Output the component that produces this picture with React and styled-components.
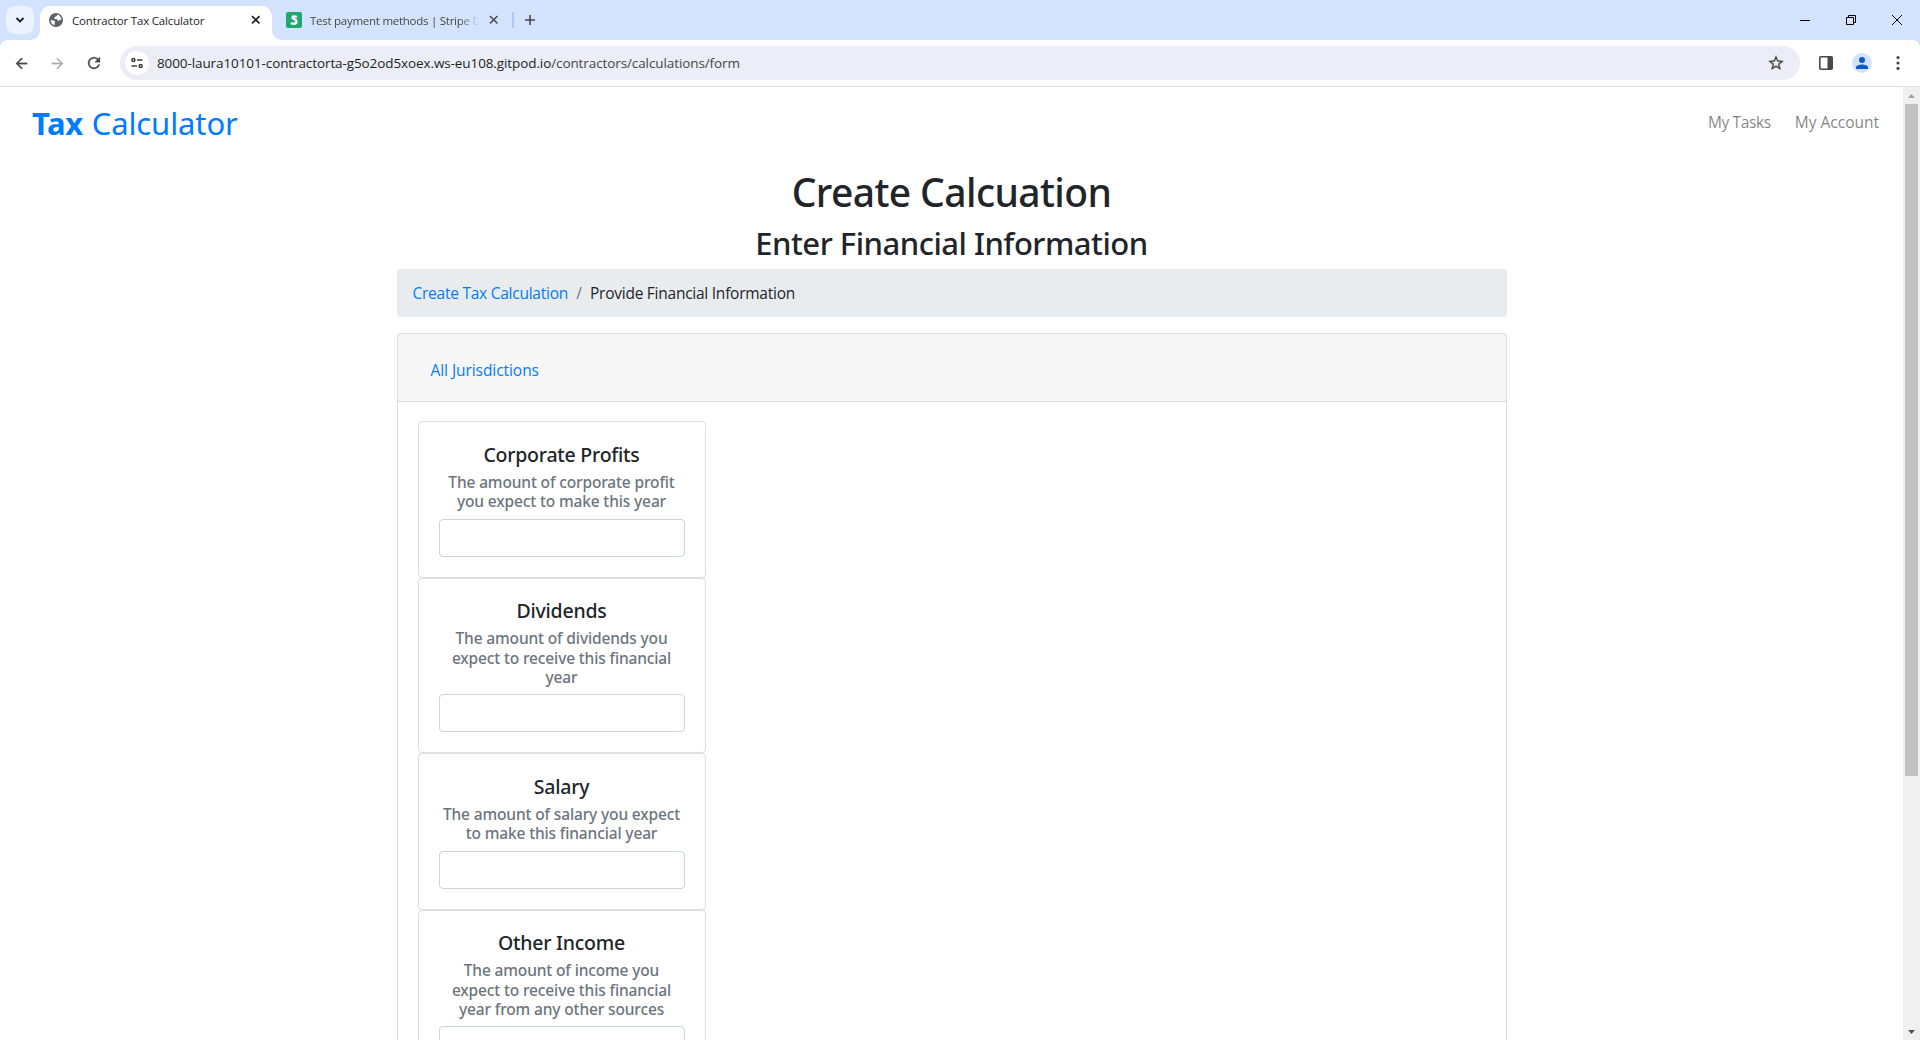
import React from "react";
import styled, { createGlobalStyle } from "styled-components";

const Global = createGlobalStyle`
  * { box-sizing: border-box; }
  html, body { margin: 0; height: 100%; overflow: hidden; background: #fff; }
  body { font-family: "Open Sans", "Noto Sans", sans-serif; color: #212529; }
  h1, h2, h5, h6 { margin: 0; font-family: "Noto Sans", sans-serif; font-weight: 500; }
  a { text-decoration: none; }
`;

const Window = styled.div`
  width: 1920px;
  height: 1040px;
  display: flex;
  flex-direction: column;
  overflow: hidden;
`;

/* Browser chrome */
const TabStrip = styled.div`
  height: 40px;
  background: #d3e3fd;
  display: flex;
  align-items: flex-start;
  padding: 6px 0 0 6px;
`;
const TabSearch = styled.button`
  width: 28px;
  height: 28px;
  margin-right: 6px;
  border: 0;
  padding: 0;
  border-radius: 9px;
  background: #ecf2fe;
  display: grid;
  place-items: center;
`;
const Tab = styled.div`
  position: relative;
  flex: none;
  height: 34px;
  width: ${(p) => p.$width}px;
  display: flex;
  align-items: center;
  padding: ${(p) => p.$padding};
  border-radius: 10px 10px 0 0;
  background: ${(p) => (p.$active ? "#fff" : "transparent")};
  ${(p) =>
    p.$active &&
    `
    &::before, &::after {
      content: "";
      position: absolute;
      bottom: 0;
      width: 10px;
      height: 10px;
    }
    &::before { left: -10px; background: radial-gradient(circle at 0 0, transparent 9.6px, #fff 10.2px); }
    &::after { right: -10px; background: radial-gradient(circle at 100% 0, transparent 9.6px, #fff 10.2px); }
  `}
`;
const Favicon = styled.span`
  display: flex;
  flex: none;
  margin-right: ${(p) => p.$gap}px;
  margin-bottom: 6px;
`;
const TabTitle = styled.span`
  flex: 1;
  min-width: 0;
  overflow: hidden;
  white-space: nowrap;
  font-size: 11.5px;
  line-height: 16px;
  margin-bottom: 4px;
  letter-spacing: ${(p) => p.$spacing}px;
  color: ${(p) => (p.$active ? "#1f1f1f" : "#474747")};
  ${(p) => p.$fade && "mask-image: linear-gradient(90deg, #000 88%, transparent 100%);"}
`;
const TabClose = styled.span`
  display: flex;
  flex: none;
  margin-left: ${(p) => p.$gap || 0}px;
  margin-bottom: 6px;
`;
const TabDivider = styled.span`
  width: 2px;
  height: 16px;
  margin: 6px 10px 0 0;
  border-radius: 1px;
  background: #a8c7fa;
`;
const NewTab = styled.span`
  display: flex;
  margin-top: 8px;
`;
const WindowControls = styled.div`
  margin-left: auto;
  display: flex;
  height: 28px;
`;
const WindowButton = styled.span`
  width: 46px;
  display: grid;
  place-items: center;
`;

const ToolbarBack = styled.div`
  background: #d3e3fd;
`;
const Toolbar = styled.div`
  height: 47px;
  background: #fff;
  border-radius: 8px 8px 0 0;
  border-bottom: 1px solid #dedfe1;
  display: flex;
  align-items: center;
  padding-left: 13px;
`;
const ToolIcon = styled.span`
  width: ${(p) => p.$width}px;
  flex: none;
  display: grid;
  place-items: center;
`;
const Omnibox = styled.div`
  width: 1680px;
  flex: none;
  height: 34px;
  margin-left: 18px;
  border-radius: 17px;
  background: #ebeef7;
  display: flex;
  align-items: center;
  padding: 0 15px 0 5px;
`;
const SiteInfo = styled.span`
  width: 24px;
  height: 24px;
  border-radius: 50%;
  background: #fff;
  display: grid;
  place-items: center;
  margin-right: 8px;
`;
const Url = styled.span`
  flex: 1;
  font-size: 13.5px;
  line-height: 20px;
  letter-spacing: -0.1px;
  white-space: nowrap;
  color: #474747;
  b { font-weight: 400; color: #1f1f1f; }
`;
const Profile = styled.span`
  width: 20px;
  height: 20px;
  border-radius: 50%;
  background: #d3e3fd;
  display: grid;
  place-items: center;
  overflow: hidden;
`;

/* Page */
const Viewport = styled.div`
  flex: 1;
  min-height: 0;
  display: flex;
`;
const Page = styled.main`
  width: 1903px;
  overflow: hidden;
`;
const Navbar = styled.nav`
  height: 80.4px;
  padding: 12px 24px 0 32px;
  display: flex;
  align-items: flex-start;
  justify-content: space-between;
`;
const Brand = styled.a`
  font-family: "Noto Sans", sans-serif;
  font-size: 31px;
  line-height: 48px;
  letter-spacing: -0.1px;
  color: #007bff;
  strong { font-weight: 700; letter-spacing: -0.4px; margin-right: 1px; }
`;
const NavLinks = styled.div`
  display: flex;
  gap: 24px;
  padding-top: 11px;
`;
const NavLink = styled.a`
  font-size: 15.5px;
  line-height: 24px;
  letter-spacing: ${(p) => p.$spacing}px;
  color: rgba(0, 0, 0, 0.5);
`;
const Container = styled.div`
  width: 1110px;
  margin: 0 auto;
`;
const Heading = styled.h1`
  padding-top: 1px;
  font-size: 39px;
  line-height: 48px;
  letter-spacing: -0.6px;
  text-align: center;
  margin-bottom: 7px;
`;
const SubHeading = styled.h2`
  padding-top: 1px;
  font-size: 31px;
  line-height: 38.4px;
  letter-spacing: -0.5px;
  text-align: center;
  margin-bottom: 6.6px;
`;
const Breadcrumb = styled.ol`
  height: 48px;
  margin: 0 0 16px;
  padding: 12px 16px;
  border-radius: 4px;
  background: #e9ecef;
  list-style: none;
  display: flex;
  font-size: 15.5px;
  line-height: 24px;
  letter-spacing: -0.25px;
`;
const Crumb = styled.li`
  a { color: #007bff; }
  & + &::before {
    content: "/";
    color: #6c757d;
    padding: 0 8.3px;
  }
`;
const Panel = styled.section`
  border: 1px solid rgba(0, 0, 0, 0.125);
  border-radius: 4px;
  height: 1100px;
`;
const PanelHeader = styled.header`
  height: 68px;
  padding: 24px 33px 0;
  background: rgba(0, 0, 0, 0.03);
  border-bottom: 1px solid rgba(0, 0, 0, 0.125);
`;
const PanelTab = styled.a`
  display: block;
  font-size: 15.5px;
  line-height: 24px;
  letter-spacing: -0.06px;
  color: #007bff;
`;
const PanelBody = styled.div`
  padding: 19px 20px;
`;
const FieldCard = styled.div`
  width: 288px;
  padding: 20px;
  border: 1px solid rgba(0, 0, 0, 0.125);
  border-radius: 4px;
  text-align: center;
`;
const FieldTitle = styled.h5`
  padding-top: 0.6px;
  font-size: 19.5px;
  line-height: 24px;
  letter-spacing: -0.23px;
  margin-bottom: 12px;
`;
const FieldHint = styled.h6`
  font-size: 15.5px;
  line-height: 19.2px;
  letter-spacing: -0.14px;
  color: #6c757d;
  margin: -6px -8px 7.4px;
`;
const Line = styled.span`
  display: block;
  white-space: nowrap;
`;
const Field = styled.input`
  display: block;
  width: 100%;
  height: 38px;
  border: 1px solid #ced4da;
  border-radius: 4px;
  background: #fff;
  outline: 0;
`;

const Scrollbar = styled.div`
  width: 17px;
  background: #f0f0f0;
  display: flex;
  flex-direction: column;
  align-items: center;
`;
const ScrollArrow = styled.span`
  height: 17px;
  display: grid;
  place-items: center;
`;
const ScrollTrack = styled.div`
  flex: 1;
`;
const ScrollThumb = styled.div`
  width: 13px;
  height: 672px;
  background: #c1c1c1;
`;

const Cross = ({ size, width, color }) => (
  <svg width={size} height={size} viewBox="0 0 10 10" stroke={color} strokeWidth={width}>
    <path d="M1 1l8 8M9 1L1 9" />
  </svg>
);

const fields = [
  { title: "Corporate Profits", hint: ["The amount of corporate profit", "you expect to make this year"] },
  { title: "Dividends", hint: ["The amount of dividends you", "expect to receive this financial", "year"] },
  { title: "Salary", hint: ["The amount of salary you expect", "to make this financial year"] },
  { title: "Other Income", hint: ["The amount of income you", "expect to receive this financial", "year from any other sources"] },
];

export default function App() {
  return (
    <Window>
      <Global />
      <TabStrip>
        <TabSearch>
          <svg width="10" height="8" viewBox="0 0 10 8" fill="none" stroke="#1f1f1f" strokeWidth="1.8">
            <path d="M1.5 2l3.5 3.5L8.5 2" />
          </svg>
        </TabSearch>
        <Tab $active $width={232} $padding="0 12px 0 9px">
          <Favicon $gap={9}>
            <svg width="14" height="14" viewBox="0 0 14 14">
              <circle cx="7" cy="7" r="7" fill="#5f6368" />
              <path d="M8.2 1.6c.3 1.2-.4 1.7-1.5 1.8-.6.1-.4 1-1.2 1.2-.7.2-.3 1.4.6 1.4 1.5 0 2.4.1 2.6 1.3.2.9 1.3.4 1.8-.1.6-.6 1.2-.4 1.9 0 .1-2.6-1.4-4.9-4.2-5.6zM1.6 7.3c1.1 0 3.2-.1 4.1.8.6.6.3 1.3 0 1.6-.5.5.2 1.1-.3 2.5C3.2 11.7 1.6 9.7 1.6 7.3z" fill="#fff" />
            </svg>
          </Favicon>
          <TabTitle $active $spacing={-0.17}>Contractor Tax Calculator</TabTitle>
          <TabClose><Cross size={9.5} width={1.7} color="#1f1f1f" /></TabClose>
        </Tab>
        <Tab $width={240} $padding="0 14px 0 14px">
          <Favicon $gap={8}>
            <svg width="16" height="16" viewBox="0 0 16 16">
              <rect width="16" height="16" rx="2" fill="#1fa971" />
              <path d="M10.9 5.1C10 4.6 9 4.4 8.2 4.4c-1.1 0-1.7.4-1.7 1.2 0 2.1 4.1 1.1 4.1 3.9 0 1.5-1.1 2.2-2.8 2.2-1 0-2-.2-2.8-.7" fill="none" stroke="#fff" strokeWidth="2.3" />
            </svg>
          </Favicon>
          <TabTitle $spacing={-0.26} $fade>Test payment methods | Stripe D</TabTitle>
          <TabClose $gap={10}><Cross size={9.5} width={1.6} color="#474747" /></TabClose>
        </Tab>
        <TabDivider />
        <NewTab>
          <svg width="12" height="12" viewBox="0 0 12 12" stroke="#474747" strokeWidth="1.6"><path d="M6 1v10M1 6h10" /></svg>
        </NewTab>
        <WindowControls>
          <WindowButton><svg width="10" height="10"><path d="M0 5.5h10" stroke="#000" /></svg></WindowButton>
          <WindowButton>
            <svg width="10" height="10" fill="none" stroke="#000"><path d="M.5 2.5h7v7h-7zM2.5 2.5v-2h7v7h-2" /></svg>
          </WindowButton>
          <WindowButton><svg width="10" height="10" stroke="#000"><path d="M0 0l10 10M10 0L0 10" /></svg></WindowButton>
        </WindowControls>
      </TabStrip>
      <ToolbarBack>
        <Toolbar>
          <ToolIcon $width={17}>
            <svg width="17" height="17" viewBox="0 0 24 24" fill="#474747"><path d="M20 10.9H7.83l5.59-5.49L12 4l-8 8 8 8 1.41-1.41L7.83 13.1H20z" stroke="#474747" strokeWidth=".4" /></svg>
          </ToolIcon>
          <ToolIcon $width={55}>
            <svg width="17" height="17" viewBox="0 0 24 24" fill="#ababab"><path d="M4 10.9h12.17l-5.59-5.49L12 4l8 8-8 8-1.41-1.41 5.58-5.49H4z" stroke="#ababab" strokeWidth=".3" /></svg>
          </ToolIcon>
          <ToolIcon $width={17}>
            <svg width="18" height="18" viewBox="0 0 24 24" fill="#474747"><path d="M17.65 6.35A7.96 7.96 0 0 0 12 4a8 8 0 1 0 7.73 10h-2.08A6 6 0 1 1 12 6c1.66 0 3.14.69 4.22 1.78L13 11h7V4z" stroke="#474747" strokeWidth=".4" /></svg>
          </ToolIcon>
          <Omnibox>
            <SiteInfo>
              <svg width="12" height="12" viewBox="0 0 12 12" fill="none" stroke="#3c3c3c" strokeWidth="1.5">
                <circle cx="2.4" cy="2.9" r="1.5" />
                <path d="M6 2.9h5.5M.5 9.1H6" />
                <circle cx="9.6" cy="9.1" r="1.5" />
              </svg>
            </SiteInfo>
            <Url><b>8000-laura10101-contractorta-g5o2od5xoex.ws-eu108.gitpod.io</b>/contractors/calculations/form</Url>
            <svg width="18" height="18" viewBox="0 0 24 24" fill="#474747">
              <path d="M22 9.24l-7.19-.62L12 2 9.19 8.63 2 9.24l5.46 4.73L5.82 21 12 17.27 18.18 21l-1.63-7.03zM12 15.4l-3.76 2.27 1-4.28-3.32-2.88 4.38-.38L12 6.1l1.71 4.04 4.38.38-3.32 2.88 1 4.28z" stroke="#474747" strokeWidth=".4" />
            </svg>
          </Omnibox>
          <ToolIcon $width={52}>
            <svg width="14" height="14" viewBox="0 0 14 14"><rect x=".8" y=".8" width="12.4" height="12.4" rx="1" fill="none" stroke="#474747" strokeWidth="1.6" /><path d="M8.5 1H13v12H8.5z" fill="#474747" /></svg>
          </ToolIcon>
          <ToolIcon $width={20}>
            <Profile>
              <svg width="12" height="12" viewBox="0 0 12 12" fill="#0b57d0"><circle cx="6" cy="3" r="3" /><path d="M0 12v-1.6C0 8.4 3.5 7.5 6 7.5s6 .9 6 2.900V12z" /></svg>
            </Profile>
          </ToolIcon>
          <ToolIcon $width={52}>
            <svg width="4" height="14" viewBox="0 0 4 14" fill="#474747"><circle cx="2" cy="1.6" r="1.6" /><circle cx="2" cy="7" r="1.6" /><circle cx="2" cy="12.4" r="1.6" /></svg>
          </ToolIcon>
        </Toolbar>
      </ToolbarBack>
      <Viewport>
        <Page>
          <Navbar>
            <Brand><strong>Tax</strong> Calculator</Brand>
            <NavLinks>
              <NavLink $spacing={-0.37}>My Tasks</NavLink>
              <NavLink $spacing={0}>My Account</NavLink>
            </NavLinks>
          </Navbar>
          <Container>
            <Heading>Create Calcuation</Heading>
            <SubHeading>Enter Financial Information</SubHeading>
            <Breadcrumb>
              <Crumb><a>Create Tax Calculation</a></Crumb>
              <Crumb>Provide Financial Information</Crumb>
            </Breadcrumb>
            <Panel>
              <PanelHeader><PanelTab>All Jurisdictions</PanelTab></PanelHeader>
              <PanelBody>
                {fields.map((f) => (
                  <FieldCard key={f.title}>
                    <FieldTitle>{f.title}</FieldTitle>
                    <FieldHint>{f.hint.map((l) => <Line key={l}>{l}</Line>)}</FieldHint>
                    <Field />
                  </FieldCard>
                ))}
              </PanelBody>
            </Panel>
          </Container>
        </Page>
        <Scrollbar>
          <ScrollArrow><svg width="7" height="4" viewBox="0 0 7 4"><path d="M3.5 0L7 4H0z" fill="#a3a3a3" /></svg></ScrollArrow>
          <ScrollTrack><ScrollThumb /></ScrollTrack>
          <ScrollArrow><svg width="7" height="4" viewBox="0 0 7 4"><path d="M3.5 4L7 0H0z" fill="#505050" /></svg></ScrollArrow>
        </Scrollbar>
      </Viewport>
    </Window>
  );
}
